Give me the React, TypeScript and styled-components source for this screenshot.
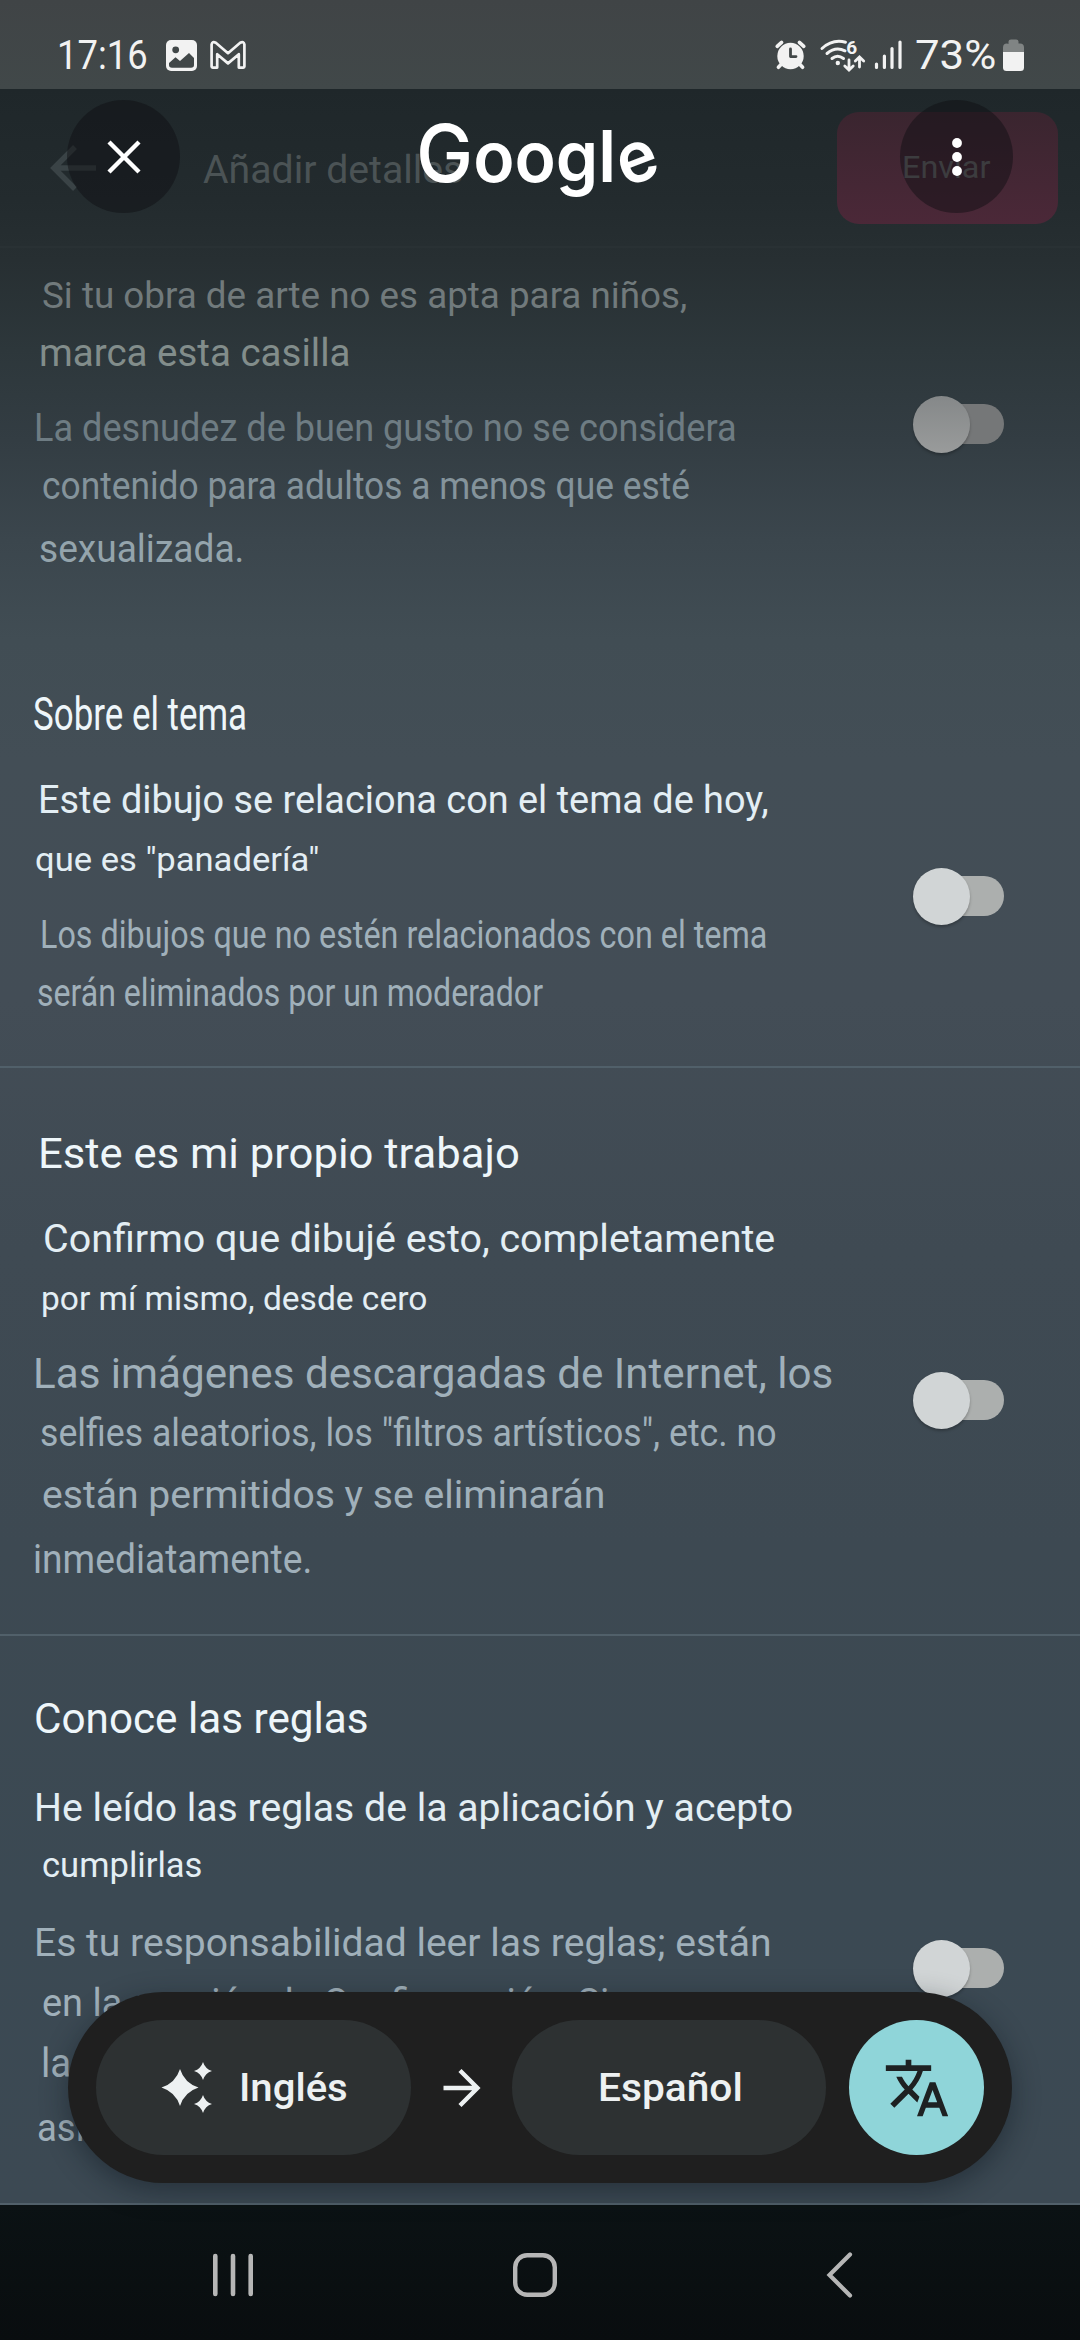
import React, { useLayoutEffect, useRef, useState } from "react";
import styled, { createGlobalStyle, css } from "styled-components";

const GlobalStyle = createGlobalStyle`
  *, *::before, *::after { box-sizing: border-box; }
  body { margin: 0; background: #3d4952; }
`;

const face = `Roboto, "Open Sans", "Liberation Sans", sans-serif`;

const Screen = styled.div`
  position: relative;
  width: 1080px;
  height: 2340px;
  overflow: hidden;
  display: flex;
  flex-direction: column;
  font-family: ${face};
  background: linear-gradient(
    180deg,
    #1f272a 89px,
    #232b2e 200px,
    #272f32 260px,
    #2d373b 350px,
    #333d43 440px,
    #3b464d 540px,
    #414d54 640px,
    #434e56 760px,
    #434d56 1000px,
    #3f4a53 1250px,
    #3d4952 1550px,
    #3b4953 1900px,
    #3c4953 2203px
  );
`;

/* ---------- fitted text ---------- */

const FitSpan = styled.span`
  display: inline-block;
  transform-origin: 0 50%;
  white-space: nowrap;
`;

function Fit({ width, children }: { width?: number; children: React.ReactNode }) {
  const ref = useRef<HTMLSpanElement>(null);
  const [scale, setScale] = useState(1);
  useLayoutEffect(() => {
    if (ref.current && width) setScale(width / ref.current.offsetWidth);
  }, [width]);
  return (
    <FitSpan ref={ref} style={{ transform: `scaleX(${scale})` }}>
      {children}
    </FitSpan>
  );
}

/* A line whose baseline rests on its bottom edge. */
const baselineRow = css<{ $rise: number }>`
  height: ${(p) => p.$rise}px;
  line-height: 0;
  white-space: nowrap;
  &::before {
    content: "";
    display: inline-block;
    height: 100%;
  }
`;

const Heading = styled.h2<{ $rise: number; $size: number; $x: number }>`
  ${baselineRow}
  margin: 0;
  padding-left: ${(p) => p.$x}px;
  font-size: ${(p) => p.$size}px;
  font-weight: 400;
  color: #eef6fa;
`;

const Line = styled.div<{ $rise: number; $size: number; $x: number; $color: string }>`
  ${baselineRow}
  padding-left: ${(p) => p.$x}px;
  font-size: ${(p) => p.$size}px;
  color: ${(p) => p.$color};
`;

/* ---------- status bar ---------- */

const StatusBar = styled.header`
  flex: none;
  height: 89px;
  display: flex;
  justify-content: space-between;
  padding: 38px 56px 0 57px;
  background: linear-gradient(180deg, #404446, #414849);
  color: #f2f2f2;
`;

const StatusGroup = styled.div`
  display: flex;
  align-items: flex-start;
`;

const StatusText = styled.span<{ $rise: number; $w: number; $gap: number }>`
  display: block;
  width: ${(p) => p.$w}px;
  margin-right: ${(p) => p.$gap}px;
  ${baselineRow}
  font-size: 40px;
`;

const Glyph = styled.svg<{ $gap?: number }>`
  display: block;
  flex: none;
  overflow: visible;
  margin-right: ${(p) => p.$gap ?? 0}px;
`;

/* ---------- dimmed app header ---------- */

const AppHeader = styled.div`
  flex: none;
  height: 159px;
  display: flex;
  align-items: flex-start;
  padding: 23px 22px 0 50px;
  border-bottom: 2px solid #293134;
`;

const AppTitle = styled.div<{ $rise: number }>`
  ${baselineRow}
  flex: 1;
  padding-left: 107px;
  font-size: 38px;
  color: #4b5355;
`;

const BackArrow = styled.svg`
  display: block;
  margin-top: 33px;
`;

const SendButton = styled.div`
  width: 221px;
  height: 112px;
  border-radius: 22px;
  background: linear-gradient(180deg, #3a252f, #4b2838);
  color: #666668;
  font-size: 32px;
  padding-left: 65px;
`;

const SendLabel = styled.div<{ $rise: number }>`
  ${baselineRow}
`;

/* ---------- settings ---------- */

const Section = styled.section<{ $end?: boolean; $h: number }>`
  flex: none;
  height: ${(p) => p.$h}px;
  border-bottom: ${(p) => (p.$end ? "2px solid #51606a" : "0")};
`;

const Setting = styled.div<{ $h: number }>`
  height: ${(p) => p.$h}px;
  display: flex;
`;

const Copy = styled.div`
  width: 913px;
`;

const Track = styled.div<{ $dim?: boolean }>`
  align-self: center;
  display: flex;
  align-items: center;
  width: 91px;
  height: 40px;
  border-radius: 20px;
  background: ${(p) =>
    p.$dim
      ? "linear-gradient(90deg, transparent 20px, #757778 20px)"
      : "linear-gradient(90deg, transparent 20px, #acafae 20px)"};
`;

const Knob = styled.div<{ $dim?: boolean }>`
  width: 57px;
  height: 57px;
  flex: none;
  border-radius: 50%;
  background: ${(p) => (p.$dim ? "linear-gradient(#858889, #999b9b)" : "#d1d5d6")};
  box-shadow: 0 2px 3px rgba(0, 0, 0, 0.25);
`;

type LineData = [text: string, rise: number, size: number, x: number, width: number | undefined, color: string];

const white = "#e3eef4";
const soft = "#a0b0ba";

interface SectionData {
  height: number;
  end?: boolean;
  dim?: boolean;
  heading?: [text: string, rise: number, size: number, x: number, width: number];
  lines: LineData[];
}

const sections: SectionData[] = [
  {
    height: 352,
    dim: true,
    lines: [
      ["Si tu obra de arte no es apta para niños,", 60, 37, 42, 645, "#717a7c"],
      ["marca esta casilla", 58, 39, 39, 311, "#828d8b"],
      ["La desnudez de buen gusto no se considera", 75, 38, 34, 703, "#6e7c83"],
      ["contenido para adultos a menos que esté", 58, 38, 42, 648, "#84939b"],
      ["sexualizada.", 63, 38, 39, 205, "#94a4ac"],
    ],
  },
  {
    height: 468,
    end: true,
    heading: ["Sobre el tema", 130, 46, 33, 214],
    lines: [
      ["Este dibujo se relaciona con el tema de hoy,", 83, 38, 38, 731, white],
      ['que es "panadería"', 58, 34, 35, 284, white],
      ["Los dibujos que no estén relacionados con el tema", 77, 38, 40, 727, soft],
      ["serán eliminados por un moderador", 58, 38, 37, 506, soft],
    ],
  },
  {
    height: 568,
    end: true,
    heading: ["Este es mi propio trabajo", 100, 43, 38, 482],
    lines: [
      ["Confirmo que dibujé esto, completamente", 84, 39, 43, 732, white],
      ["por mí mismo, desde cero", 58, 33, 41, 386, white],
      ["Las imágenes descargadas de Internet, los", 78, 42, 33, 800, soft],
      ['selfies aleatorios, los "filtros artísticos", etc. no', 58, 38, 40, 737, soft],
      ["están permitidos y se eliminarán", 62, 38, 42, 563, soft],
      ["inmediatamente.", 65, 40, 33, 279, soft],
    ],
  },
  {
    height: 569,
    end: true,
    heading: ["Conoce las reglas", 97, 43, 34, 335],
    lines: [
      ["He leído las reglas de la aplicación y acepto", 88, 39, 34, 759, white],
      ["cumplirlas", 56, 35, 42, 160, white],
      ["Es tu responsabilidad leer las reglas; están", 79, 38, 34, 738, soft],
      ["en la sección de Configuración. Si", 60, 38, 42, 567, soft],
      ["la", 61, 41, 41, 30, soft],
      ["así", 64, 38, 37, 48, soft],
    ],
  },
];

/* ---------- lens overlay ---------- */

const LensTop = styled.div`
  position: absolute;
  top: 100px;
  left: 67px;
  right: 67px;
  height: 113px;
  display: flex;
  justify-content: space-between;
`;

const RoundButton = styled.div`
  width: 113px;
  height: 113px;
  border-radius: 50%;
  display: grid;
  place-items: center;
  background: rgba(14, 15, 18, 0.48);
`;

const Logo = styled.div<{ $rise: number }>`
  ${baselineRow}
  width: 241px;
  margin-right: 7px;
  font-family: Inter, ${face};
  font-weight: 600;
  font-size: 71px;
  color: #fff;
`;

const Capital = styled.span`
  font-size: 80px;
  font-weight: 500;
`;

const Tilt = styled.span`
  display: inline-block;
  transform: rotate(-20deg);
  transform-origin: 50% 54%;
  line-height: 40px;
`;

const LanguageBar = styled.div`
  position: absolute;
  top: 1992px;
  left: 68px;
  width: 944px;
  height: 191px;
  border-radius: 96px;
  padding: 28px;
  display: flex;
  align-items: center;
  background: #1f1f1f;
  box-shadow: 0 8px 28px rgba(10, 20, 28, 0.45);
`;

const Pill = styled.div<{ $pad: number }>`
  width: 315px;
  height: 135px;
  border-radius: 68px;
  display: flex;
  padding-left: ${(p) => p.$pad}px;
  background: #2d3132;
  color: #edf1f2;
`;

const PillLabel = styled.div<{ $rise: number }>`
  ${baselineRow}
  font-size: 39px;
  font-weight: 500;
`;

const Sparkles = styled.svg`
  display: block;
  margin: 42px 26px 0 0;
`;

const Direction = styled.svg`
  display: block;
  margin: 0 31px 0 32px;
`;

const TranslateButton = styled.div`
  width: 135px;
  height: 135px;
  margin-left: 23px;
  border-radius: 50%;
  display: grid;
  place-items: center;
  background: #8fd5d9;
`;

const NavBar = styled.nav`
  flex: 1;
  display: flex;
  align-items: center;
  padding: 5px 0 0 212px;
  background: linear-gradient(180deg, #0b1214, #090d0f);
`;

const NavIcon = styled.svg<{ $gap: number }>`
  display: block;
  margin-right: ${(p) => p.$gap}px;
`;

const star = (cx: number, cy: number, r: number) => {
  const k = r * 0.24;
  return `M${cx} ${cy - r}Q${cx + k} ${cy - k} ${cx + r} ${cy}Q${cx + k} ${cy + k} ${cx} ${cy + r}Q${cx - k} ${cy + k} ${cx - r} ${cy}Q${cx - k} ${cy - k} ${cx} ${cy - r}Z`;
};

export default function App() {
  return (
    <>
      <GlobalStyle />
      <Screen>
        <StatusBar>
          <StatusGroup>
            <StatusText $rise={31} $w={91} $gap={18}>
              <Fit width={91}>17:16</Fit>
            </StatusText>
            <Glyph $gap={13} width="31" height="34" viewBox="0 0 31 34">
              <rect x="0" y="2" width="31" height="31" rx="5" fill="#f2f2f2" />
              <circle cx="9.7" cy="11.8" r="3.4" fill="#414748" />
              <path d="M3 25L9.5 19.2L14 23L23 15L28 20V27Q28 29.8 25 29.8H6Q3 29.8 3 27Z" fill="#414748" />
            </Glyph>
            <Glyph width="36" height="34" viewBox="0 0 36 34">
              <path
                d="M1.6 28.5V6.5Q2.2 3 5.8 4.8L18 15.2L30.2 4.8Q33.8 3 34.4 6.5V28.5Q34.4 29.6 33.3 29.6H28.8V16.2L18 25.4L7.2 16.2V29.6H2.7Q1.6 29.6 1.6 28.5Z"
                fill="none"
                stroke="#f2f2f2"
                strokeWidth="2.7"
                strokeLinejoin="round"
              />
            </Glyph>
          </StatusGroup>
          <StatusGroup>
            <Glyph $gap={14} width="31" height="34" viewBox="0 0 31 34">
              <circle cx="15.5" cy="18" r="13.2" fill="#f2f2f2" />
              <path d="M15.5 11V18.6H21" fill="none" stroke="#414748" strokeWidth="2.8" strokeLinecap="round" strokeLinejoin="round" />
              <path d="M2.2 8.4L6.6 4.4M28.8 8.4L24.4 4.4M6 26.5L3.4 29.3M25 26.5L27.6 29.3" stroke="#f2f2f2" strokeWidth="3.6" strokeLinecap="round" />
            </Glyph>
            <Glyph $gap={8} width="46" height="34" viewBox="0 0 46 34" fill="none" stroke="#f2f2f2" strokeLinecap="round">
              <path d="M2 10.5Q12.5 0.8 25.5 4.2" strokeWidth="3" />
              <path d="M7 15.5Q15.5 8.2 25 12.8" strokeWidth="3" />
              <path d="M12 20.5Q17.5 16 23.5 20.5" strokeWidth="3" />
              <circle cx="17.8" cy="25" r="2.2" fill="#f2f2f2" stroke="none" />
              <path d="M29 22V31.5M24.8 28L29 32L33.2 28M39.5 29V19.5M35.3 23L39.5 19L43.7 23" strokeWidth="2.8" />
              <text x="26.3" y="15.6" fontSize="19" fontWeight="700" fill="#f2f2f2" stroke="none" fontFamily="Roboto, sans-serif">
                6
              </text>
            </Glyph>
            <Glyph $gap={12} width="29" height="34" viewBox="0 0 29 34" stroke="#f2f2f2" strokeWidth="3.2" strokeLinecap="round">
              <path d="M2.5 26V29.5M10.4 18V29.5M18 10.5V29.5M26 4V29.5" />
            </Glyph>
            <StatusText $rise={31} $w={80} $gap={8}>
              <Fit width={81}>73%</Fit>
            </StatusText>
            <Glyph width="21" height="34" viewBox="0 0 21 34">
              <path d="M5.5 6V3.5Q5.5 1.5 8 1.5H13Q15.5 1.5 15.5 3.5V5.5H17Q21 5.5 21 9.5V14H0V9.5Q0 5.5 4 5.5Z" fill="#808484" />
              <path d="M0 14H21V29.5Q21 33 17.5 33H3.5Q0 33 0 29.5Z" fill="#f2f2f2" />
            </Glyph>
          </StatusGroup>
        </StatusBar>

        <AppHeader>
          <BackArrow width="46" height="46" viewBox="0 0 46 46" fill="none" stroke="#3a4346" strokeWidth="5.5">
            <path d="M25 2L4 23L25 44M4 23H46" />
          </BackArrow>
          <AppTitle $rise={71}>
            <Fit width={260}>Añadir detalles</Fit>
          </AppTitle>
          <SendButton>
            <SendLabel $rise={66}>
              <Fit width={88}>Enviar</Fit>
            </SendLabel>
          </SendButton>
        </AppHeader>

        {sections.map((s, i) => {
          const used = (s.heading ? s.heading[1] : 0) + (s.end ? 2 : 0);
          const slack = i === 1 ? 4 : i === 2 ? 2 : 0;
          return (
            <Section key={i} $h={s.height} $end={s.end}>
              {s.heading && (
                <Heading $rise={s.heading[1]} $size={s.heading[2]} $x={s.heading[3]}>
                  <Fit width={s.heading[4]}>{s.heading[0]}</Fit>
                </Heading>
              )}
              <Setting $h={s.height - used - slack}>
                <Copy>
                  {s.lines.map(([text, rise, size, x, width, color]) => (
                    <Line key={text} $rise={rise} $size={size} $x={x} $color={color}>
                      <Fit width={width}>{text}</Fit>
                    </Line>
                  ))}
                </Copy>
                <Track $dim={s.dim}>
                  <Knob $dim={s.dim} />
                </Track>
              </Setting>
            </Section>
          );
        })}

        <NavBar>
          <NavIcon $gap={259} width="42" height="46" viewBox="0 0 42 46" stroke="#b6b6b6" strokeWidth="4.6" strokeLinecap="round">
            <path d="M3.3 4V42M21 4V42M38.7 4V42" />
          </NavIcon>
          <NavIcon $gap={268} width="44" height="46" viewBox="0 0 44 46" fill="none" stroke="#b6b6b6" strokeWidth="4.4">
            <rect x="2.2" y="3.2" width="39.6" height="39.6" rx="12" />
          </NavIcon>
          <NavIcon $gap={0} width="28" height="46" viewBox="0 0 28 46" fill="none" stroke="#b6b6b6" strokeWidth="4.2" strokeLinecap="round">
            <path d="M25 2.5L4.5 23L25 43.5" />
          </NavIcon>
        </NavBar>

        <LensTop>
          <RoundButton>
            <svg width="34" height="34" viewBox="0 0 34 34" stroke="#fff" strokeWidth="4.4">
              <path d="M2 2L32 32M32 2L2 32" />
            </svg>
          </RoundButton>
          <Logo $rise={82}>
            <Fit width={240}>
              <Capital>G</Capital>oogl<Tilt>e</Tilt>
            </Fit>
          </Logo>
          <RoundButton>
            <svg width="10" height="40" viewBox="0 0 10 40" fill="#fff">
              <circle cx="5" cy="6" r="4.9" />
              <circle cx="5" cy="20" r="4.9" />
              <circle cx="5" cy="34" r="4.9" />
            </svg>
          </RoundButton>
        </LensTop>

        <LanguageBar>
          <Pill $pad={65}>
            <Sparkles width="52" height="52" viewBox="0 0 52 52" fill="#edf1f2">
              <path d={star(19, 25.5, 18.5)} />
              <path d={star(42, 9, 9)} />
              <path d={star(42, 42, 9)} />
            </Sparkles>
            <PillLabel $rise={81}>
              <Fit width={109}>Inglés</Fit>
            </PillLabel>
          </Pill>
          <Direction width="38" height="38" viewBox="0 0 38 38" fill="none" stroke="#edf1f2" strokeWidth="4.4">
            <path d="M0.5 19H34.5M17 1.5L34.5 19L17 36.5" />
          </Direction>
          <Pill $pad={86}>
            <PillLabel $rise={81}>
              <Fit width={145}>Español</Fit>
            </PillLabel>
          </Pill>
          <TranslateButton>
            <svg width="68" height="68" viewBox="0 0 24 24" fill="#1e2122">
              <path d="M12.87 15.07l-2.54-2.51.03-.03c1.74-1.94 2.98-4.17 3.71-6.53H17V4h-7V2H8v2H1v1.99h11.17C11.5 7.92 10.44 9.75 9 11.35 8.07 10.32 7.3 9.19 6.69 8h-2c.73 1.63 1.73 3.17 2.98 4.56l-5.09 5.02L4 19l5-5 3.11 3.11.76-2.04zM18.5 10h-2L12 22h2l1.12-3h4.75L21 22h2l-4.5-12zm-2.62 7l1.62-4.33L19.12 17h-3.24z" />
            </svg>
          </TranslateButton>
        </LanguageBar>
      </Screen>
    </>
  );
}
